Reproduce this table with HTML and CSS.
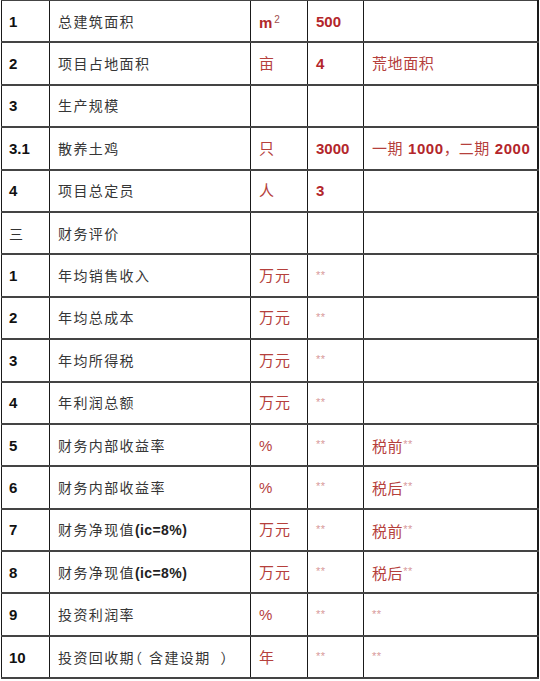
FILE: index.html
```html
<!DOCTYPE html>
<html lang="zh">
<head>
<meta charset="utf-8">
<link rel="stylesheet" href="styles.css">
</head>
<body>
<table class="sheet">
  <colgroup>
    <col class="c-no"><col class="c-name"><col class="c-unit"><col class="c-val"><col class="c-note">
  </colgroup>
  <tbody>
    <tr><td class="no">1</td><td class="name">总建筑面积</td><td class="unit"><b>m</b><sup>2</sup></td><td class="val">500</td><td></td></tr>
    <tr><td class="no">2</td><td class="name">项目占地面积</td><td class="unit">亩</td><td class="val">4</td><td class="note">荒地面积</td></tr>
    <tr><td class="no">3</td><td class="name">生产规模</td><td></td><td></td><td></td></tr>
    <tr><td class="no">3.1</td><td class="name">散养土鸡</td><td class="unit">只</td><td class="val">3000</td><td class="note">一期 <b>1000</b><span class="comma">，</span>二期 <b>2000</b></td></tr>
    <tr><td class="no">4</td><td class="name">项目总定员</td><td class="unit">人</td><td class="val">3</td><td></td></tr>
    <tr><td class="no cn">三</td><td class="name">财务评价</td><td></td><td></td><td></td></tr>
    <tr><td class="no">1</td><td class="name">年均销售收入</td><td class="unit">万元</td><td class="val"><span class="ast">**</span></td><td></td></tr>
    <tr><td class="no">2</td><td class="name">年均总成本</td><td class="unit">万元</td><td class="val"><span class="ast">**</span></td><td></td></tr>
    <tr><td class="no">3</td><td class="name">年均所得税</td><td class="unit">万元</td><td class="val"><span class="ast">**</span></td><td></td></tr>
    <tr><td class="no">4</td><td class="name">年利润总额</td><td class="unit">万元</td><td class="val"><span class="ast">**</span></td><td></td></tr>
    <tr><td class="no">5</td><td class="name">财务内部收益率</td><td class="unit">%</td><td class="val"><span class="ast">**</span></td><td class="note">税前<span class="ast">**</span></td></tr>
    <tr><td class="no">6</td><td class="name">财务内部收益率</td><td class="unit">%</td><td class="val"><span class="ast">**</span></td><td class="note">税后<span class="ast">**</span></td></tr>
    <tr><td class="no">7</td><td class="name">财务净现值<b>(ic=8%)</b></td><td class="unit">万元</td><td class="val"><span class="ast">**</span></td><td class="note">税前<span class="ast">**</span></td></tr>
    <tr><td class="no">8</td><td class="name">财务净现值<b>(ic=8%)</b></td><td class="unit">万元</td><td class="val"><span class="ast">**</span></td><td class="note">税后<span class="ast">**</span></td></tr>
    <tr><td class="no">9</td><td class="name">投资利润率</td><td class="unit">%</td><td class="val"><span class="ast">**</span></td><td class="note"><span class="ast">**</span></td></tr>
    <tr><td class="no">10</td><td class="name">投资回收期<span class="paren-open">（</span>含建设期<span class="paren-close">）</span></td><td class="unit">年</td><td class="val"><span class="ast">**</span></td><td class="note"><span class="ast">**</span></td></tr>
  </tbody>
</table>
</body>
</html>
```

FILE: styles.css
```css
html, body {
  margin: 0;
  padding: 0;
  background: #ffffff;
}

body {
  font-family: "Liberation Sans", "Noto Sans CJK SC", sans-serif;
  font-size: 14px;
  color: #333333;
}

.sheet {
  border-collapse: collapse;
  table-layout: fixed;
  width: 538px;
  margin: -1px 0 0 1px;
}

.c-no { width: 48px; }
.c-name { width: 201px; }
.c-unit { width: 57px; }
.c-val { width: 56px; }
.c-note { width: auto; }

.sheet td {
  border-left: 1px solid #1a1a1a;
  border-right: 1px solid #1a1a1a;
  border-top: 2px solid #444444;
  border-bottom: 2px solid #444444;
  height: 39.4px;
  padding: 1px 0 0 8px;
  vertical-align: middle;
  white-space: nowrap;
  overflow: hidden;
  line-height: 18px;
}

.sheet td:last-child {
  border-right: 2px solid #1a1a1a;
}

.no {
  font-weight: bold;
  color: #111111;
  font-size: 15px;
  padding-left: 7px !important;
}

.no.cn {
  font-weight: normal;
  font-size: 14px;
  color: #333333;
}

.name {
  letter-spacing: 1.4px;
  color: #363636;
}

.name b {
  color: #222222;
  letter-spacing: 0.4px;
}

.paren-open {
  font-feature-settings: "halt";
  letter-spacing: 0;
  padding-right: 7px;
}

.paren-close {
  font-feature-settings: "halt";
  letter-spacing: 0;
  padding-left: 10px;
}

.comma {
  display: inline-block;
  width: 15px;
  text-align: center;
  letter-spacing: 0;
}

.unit {
  color: #b5403c;
  font-size: 15px;
  letter-spacing: 1px;
}

.unit b {
  color: #b12a2a;
}

.unit sup {
  font-size: 10px;
  color: #a05050;
  vertical-align: 5px;
  margin-left: 1px;
}

.val {
  color: #b3262b;
  font-weight: bold;
  font-size: 15px;
}

.note {
  color: #b5403c;
  font-size: 15px;
  letter-spacing: 0.6px;
}

.note b {
  color: #b3262b;
}

.ast {
  font-weight: normal;
  font-size: 11px;
  color: #d89a9a;
  letter-spacing: 0.5px;
  vertical-align: 4px;
}
```
